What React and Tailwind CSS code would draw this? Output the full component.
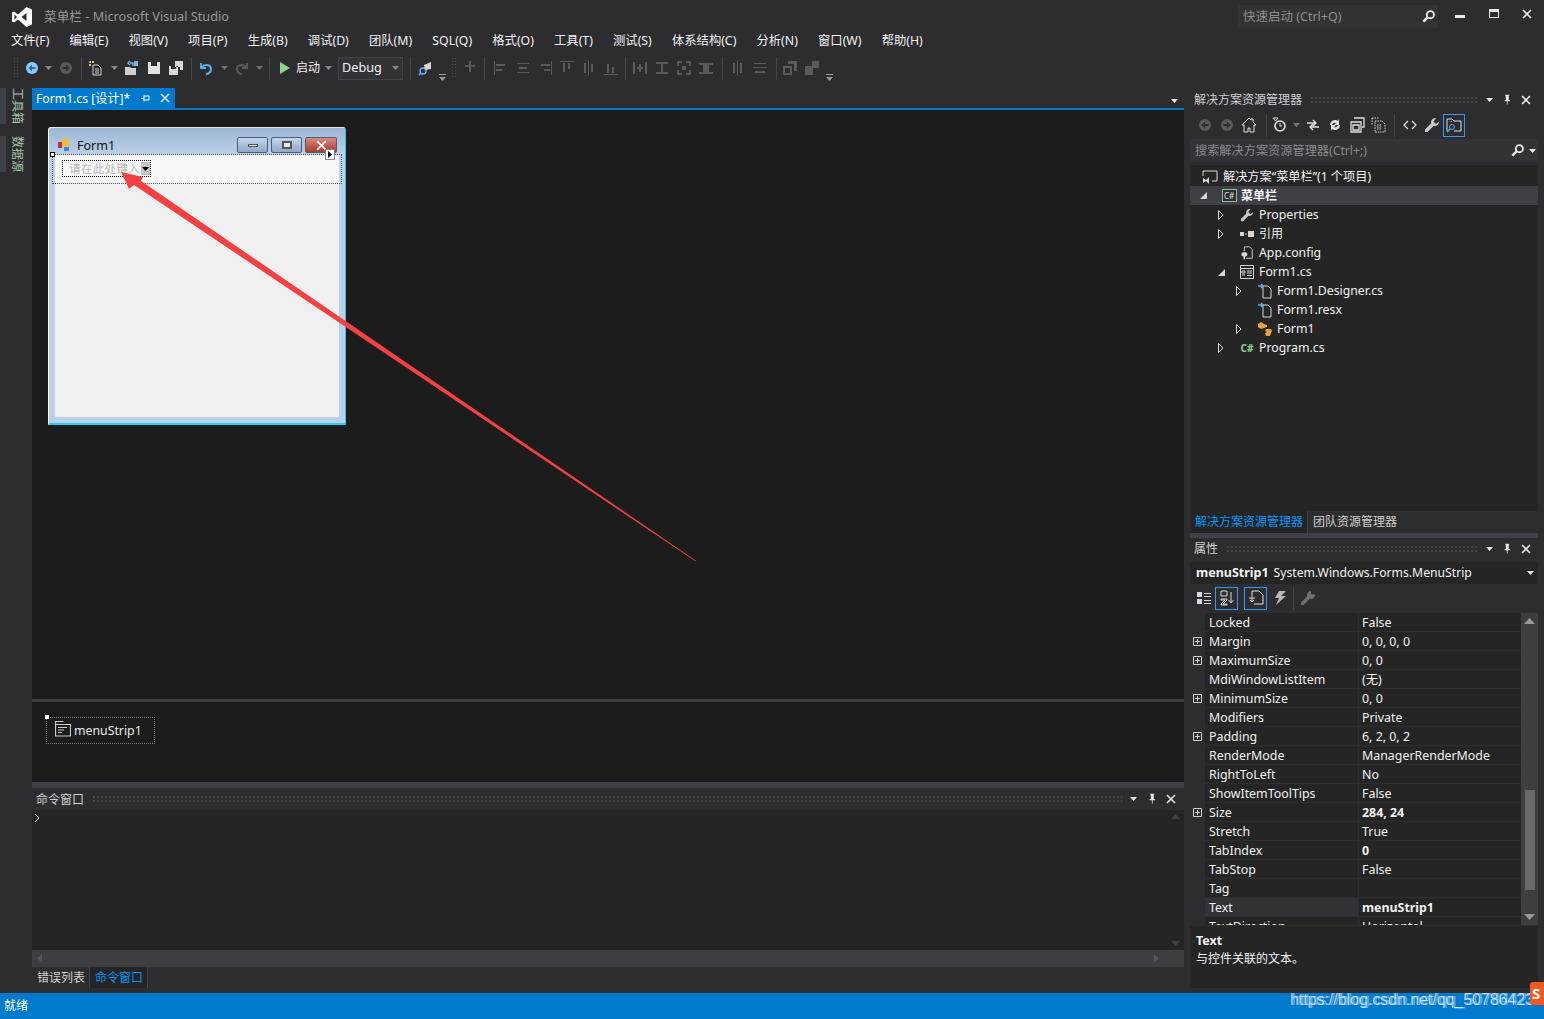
import React from "react";

const S = ({ children, size = 16, className = "" }) => (
  <svg width={size} height={size} viewBox="0 0 16 16" fill="none" className={`shrink-0 ${className}`}>{children}</svg>
);
const D = "#5a5a5d";
const L = "#d0d0d0";

const Caret = ({ c = "#8a8a8a" }) => (
  <svg width="7" height="4" viewBox="0 0 7 4" className="shrink-0"><path d="M0 0h7L3.5 4z" fill={c} /></svg>
);
const Sep = () => <div className="w-px h-[23px] bg-[#46464a] shrink-0" />;
const Grip = () => (
  <div className="w-[5px] h-[22px] shrink-0 bg-[radial-gradient(#4c4c50_1px,transparent_1px)] bg-[length:3px_3px]" />
);
const Overflow = () => (
  <svg width="7" height="7" viewBox="0 0 7 7" className="shrink-0 block"><path d="M0 0h7v1H0zM0 3h7L3.5 7z" fill="#9a9a9a" /></svg>
);

const CircleArrow = ({ fill, dir, arrow = "#2d2d30" }) => (
  <S>
    <circle cx="8" cy="8" r="6" fill={fill} />
    {dir === "l" ? (
      <path d="M8 4.5 4.5 8 8 11.5V9h3.5V7H8z" fill={arrow} />
    ) : (
      <path d="M8 4.5 11.5 8 8 11.5V9H4.5V7H8z" fill={arrow} />
    )}
  </S>
);

const Search = ({ c = "#e8e8e8" }) => (
  <S size={15}>
    <circle cx="10" cy="6" r="3.8" stroke={c} strokeWidth="2" />
    <path d="M7 9 2.5 13.5" stroke={c} strokeWidth="2.6" />
  </S>
);
const Pin = ({ c = "#e8e8e8" }) => (
  <S size={12}>
    <path d="M4 1h6v1H9v6h1.5v1.5H7.5V14h-1V9.500H3.500V8H5V2H4z" fill={c} />
  </S>
);
const X = ({ size = 10, c = "#e8e8e8" }) => (
  <svg width={size} height={size} viewBox="0 0 10 10" className="shrink-0"><path d="M1 1l8 8M9 1L1 9" stroke={c} strokeWidth="1.6" /></svg>
);

const menu = ["文件(F)", "编辑(E)", "视图(V)", "项目(P)", "生成(B)", "调试(D)", "团队(M)", "SQL(Q)", "格式(O)", "工具(T)", "测试(S)", "体系结构(C)", "分析(N)", "窗口(W)", "帮助(H)"];

const Align = ({ d }) => <S className="mx-[3px]"><path d={d} fill={D} /></S>;

const TopBar = () => (
  <div className="h-[84px] shrink-0 flex flex-col">
    <div className="h-[30px] flex items-start">
      <svg width="22" height="22" viewBox="0 0 22 22" className="ml-[11px] mt-[6px] shrink-0">
        <path d="M15.500 1 21 3.500v15L15.500 21 7 13.500 3 16.500 1 15.500v-9l2-1 4 3zM15.500 7 10.500 11l5 4z" fill="#fff" fillRule="evenodd" />
        <path d="M3.500 8.500v5L6 11z" fill="#2d2d30" />
      </svg>
      <div className="ml-[11px] mt-[7px] w-[190px] whitespace-nowrap text-[12.700px] leading-[19px] text-[#999999]">菜单栏 - Microsoft Visual Studio</div>
      <div className="ml-[1004px] mt-[5px] w-[200px] h-[23px] bg-[#333337] flex items-center justify-between pl-[5px] pr-[2px] text-[12.500px] text-[#8f8f8f]">
        <span className="pt-px">快速启动 (Ctrl+Q)</span>
        <Search />
      </div>
      <div className="ml-[17px] mt-[15px] w-[10px] h-[3px] bg-[#e8e8e8] shrink-0" />
      <div className="ml-[24px] mt-[9px] w-[10px] h-[9px] border border-[#e8e8e8] border-t-[3px] shrink-0" />
      <div className="ml-[23px] mt-[9px]"><X /></div>
    </div>
    <div className="h-[22px] flex items-center pl-[11px] gap-[20.200px] text-[12.300px] text-[#f1f1f1]">
      {menu.map((m) => <span key={m} className="whitespace-nowrap">{m}</span>)}
    </div>
    <div className="h-[32px] flex items-center pl-[13px] text-[#f1f1f1]">
      <Grip />
      <div className="ml-[6px]"><CircleArrow fill="#8fc8f6" dir="l" arrow="#1e6fb8" /></div>
      <div className="ml-[5px]"><Caret /></div>
      <div className="ml-[6px]"><CircleArrow fill={D} dir="r" /></div>
      <div className="ml-[7px]"><Sep /></div>
      <S className="ml-[6px]">
        <path d="M5 5h5l3 3v7H5z" stroke={L} fill="none" />
        <path d="M1 1h2v2H1zM4 1h2v2H4zM1 4h2v2H1z" fill="#d8c070" />
        <path d="M7 9h4M7 11h4M7 13h4" stroke={L} />
      </S>
      <div className="ml-[7px]"><Caret /></div>
      <S className="ml-[6px]">
        <path d="M1 7h5l1 1h5v7H1z" fill="#cfcfcf" />
        <path d="M9 6V3h-3M6 1 4 3l2 2" stroke="#6fb5ee" strokeWidth="1.500" />
        <path d="M10 1h4v5h-4z" fill="#6fb5ee" />
      </S>
      <S className="ml-[6px]"><path d="M2 2h12v12H2zM5 2v4h6V2z" fill="#e2e2e2" fillRule="evenodd" /></S>
      <S className="ml-[6px]"><path d="M7 1h8v9h-3V7H7zM1 6h9v9H1zM3 6v3h5V6z" fill="#d8d8d8" fillRule="evenodd" /></S>
      <div className="ml-[7px]"><Sep /></div>
      <S className="ml-[6px]">
        <path d="M3 3v5h5" stroke="#5aaeee" strokeWidth="1.800" />
        <path d="M3.500 7.500C6 4 12.500 4 13 8.500c.3 3-2 5-5 6" stroke="#5aaeee" strokeWidth="2" />
      </S>
      <div className="ml-[7px]"><Caret c="#6f6f6f" /></div>
      <S className="ml-[6px]">
        <path d="M13 3v5H8" stroke={D} strokeWidth="1.800" />
        <path d="M12.500 7.500C10 4 3.500 4 3 8.500c-.3 3 2 5 5 6" stroke={D} strokeWidth="2" />
      </S>
      <div className="ml-[6px]"><Caret c="#6f6f6f" /></div>
      <div className="ml-[6px]"><Sep /></div>
      <svg width="12" height="14" viewBox="0 0 12 14" className="ml-[9px] shrink-0"><path d="M1 1l10 6-10 6z" fill="#8cd28c" /></svg>
      <span className="ml-[5px] text-[12px] w-[26px]">启动</span>
      <div className="ml-[3px]"><Caret /></div>
      <div className="ml-[6px] w-[65px] h-[23px] border border-[#434346] bg-[#333337] flex items-center justify-between pl-[3px] pr-[3px] text-[12.700px]">
        <span>Debug</span><Caret />
      </div>
      <div className="ml-[7px]"><Sep /></div>
      <S className="ml-[7px]">
        <circle cx="5" cy="11" r="3" stroke="#66b2ee" strokeWidth="1.400" />
        <path d="M3 13 1 15" stroke="#66b2ee" strokeWidth="1.600" />
        <path d="M6 5l7-3v7l-6 1z" fill="#d6d6d6" />
      </S>
      <div className="ml-[5px] self-end mb-[3px]"><Overflow /></div>
      <div className="ml-[5px]"><Grip /></div>
      <div className="ml-[3px]"><Align d="M3 5h10v2H3zM7 7h2v5H7zM7 1h2v4H7z" /></div>
      <div className="ml-[3px]"><Sep /></div>
      <div className="ml-[5px] flex items-center">
        <Align d="M1 1h1v14H1zM3 4h9v2H3zM3 9h6v2H3z" />
        <Align d="M2 3h12v1H2zM4 7h8v2H4zM2 12h12v1H2z" />
        <Align d="M14 1h1v14h-1zM4 4h9v2H4zM7 9h6v2H7z" />
        <Align d="M1 1h14v1H1zM4 3h2v9H4zM9 3h2v6H9z" />
        <Align d="M3 3h2v10H3zM7 1h1v14H7zM10 4h2v8h-2z" />
        <Align d="M1 14h14v1H1zM4 4h2v9H4zM9 7h2v6H9z" />
      </div>
      <div className="ml-[3px]"><Sep /></div>
      <div className="ml-[3px] flex items-center">
        <Align d="M1 2h2v12H1zM13 2h2v12h-2zM7 4h2v3h2v2H9v3H7V9H5V7h2z" />
        <Align d="M2 2h12v2H2zM2 12h12v2H2zM7 4h2v8H7z" />
        <Align d="M1 1h5v2H3v3H1zM10 1h5v5h-2V3h-3zM1 10h2v3h3v2H1zM13 10h2v5h-5v-2h3zM6 6h4v4H6z" />
        <Align d="M1 3h14v2H1zM1 12h14v2H1zM5 5h6v7H5z" />
      </div>
      <div className="ml-[5px]"><Sep /></div>
      <div className="ml-[4px] flex items-center">
        <Align d="M3 3h2v10H3zM7 1h1v14H7zM10 3h2v10h-2z" />
        <Align d="M2 3h12v1H2zM1 7h14v1H1zM3 11h10v2H3z" />
      </div>
      <div className="ml-[5px]"><Sep /></div>
      <div className="ml-[2px] flex items-center">
        <Align d="M1 6h9v9H1zM3 8v5h5V8zM12 1h3v10h-3V4H6V1z" />
        <Align d="M1 6h8v9H1zM8 1h7v7H8z" />
      </div>
      <div className="ml-[3px] self-end mb-[3px]"><Overflow /></div>
    </div>
  </div>
);

const LeftStrip = () => (
  <div className="w-[32px] shrink-0 flex flex-col gap-[12px]">
    <div className="h-[36px] border-l-[6px] border-[#3f3f46] pl-[4px] flex justify-center w-[24px]">
      <span className="[writing-mode:vertical-rl] [text-orientation:sideways] whitespace-nowrap text-[12px] leading-[14px] text-[#a3c5a8]">工具箱</span>
    </div>
    <div className="h-[36px] border-l-[6px] border-[#3f3f46] pl-[4px] flex justify-center w-[24px]">
      <span className="[writing-mode:vertical-rl] [text-orientation:sideways] whitespace-nowrap text-[12px] leading-[14px] text-[#a3c5a8]">数据源</span>
    </div>
  </div>
);

const WinBtn = ({ w, bg, children }) => (
  <div className={`h-[16px] ${w} ${bg} border border-[#4d5f78] rounded-[2px] flex items-center justify-center`}>{children}</div>
);

const Form = () => (
  <div className="relative ml-[16px] mt-[17px] w-[298px] h-[298px] bg-[#b9d1ea] border border-l-white border-t-[#dfe8f2] border-r-[#25cdea] border-b-2 border-b-[#25cdea] rounded-t-[3px] flex flex-col">
    <div className="h-[27px] bg-gradient-to-b from-[#9cb6d5] to-[#bcd1e8] flex items-start pl-[9px] rounded-t-[3px] shrink-0">
      <svg width="14" height="14" viewBox="0 0 14 14" className="mt-[10px] shrink-0">
        <rect x="0" y="4" width="4" height="6" fill="#b33" /><rect x="4" y="1" width="7" height="7" fill="#f0c030" /><rect x="6" y="9" width="5" height="4" fill="#4a80d0" />
      </svg>
      <span className="ml-[5px] mt-[8px] text-[12.500px] leading-[19px] text-[#111]">Form1</span>
      <div className="ml-auto mr-[8px] mt-[9px] flex gap-[3px]">
        <WinBtn w="w-[31px]" bg="bg-gradient-to-b from-[#c5d6ea] to-[#8fa9c9]"><div className="w-[10px] h-[3px] bg-[#e8e8e8] border border-[#555]" /></WinBtn>
        <WinBtn w="w-[31px]" bg="bg-gradient-to-b from-[#c5d6ea] to-[#8fa9c9]"><div className="w-[10px] h-[8px] bg-[#e8e8e8] border-2 border-[#555]" /></WinBtn>
        <WinBtn w="w-[32px]" bg="bg-gradient-to-b from-[#d98a7e] to-[#a8382a]"><X size={11} c="#f4f4f4" /></WinBtn>
      </div>
    </div>
    <div className="mx-[6px] mb-[6px] flex-1 bg-[#f0f0f0] flex flex-col">
      <div className="h-[27px] bg-[#f8f8f8] pl-[7px] pt-[5px] shrink-0">
        <div className="w-[89px] h-[17px] border border-dotted border-black flex items-center justify-between pl-[6px] text-[11.800px] text-[#b8b8b8]">
          <span className="whitespace-nowrap">请在此处键入</span>
          <div className="w-[9px] h-[13px] bg-[#c4c4c4] flex items-center justify-center shrink-0"><Caret c="#000" /></div>
        </div>
      </div>
    </div>
    <div className="absolute left-[3px] top-[26px] w-[290px] h-[30px] border border-dotted border-[#555]" />
    <div className="absolute left-[1px] top-[24px] w-[5px] h-[5px] bg-white border border-black" />
    <div className="absolute left-[276px] top-[21px] w-[10px] h-[11px] bg-white border border-[#888] flex items-center justify-center">
      <svg width="4" height="7" viewBox="0 0 4 7"><path d="M0 0l4 3.500L0 7z" fill="#000" /></svg>
    </div>
  </div>
);

const Center = () => (
  <div className="flex-1 min-w-0 flex flex-col">
    <div className="h-[22px] shrink-0 flex items-stretch border-b-2 border-[#007acc] relative">
      <div className="w-[143px] bg-[#007acc] flex items-center pl-[4px] text-[12.200px] text-white whitespace-nowrap">
        <span className="pt-[3px] w-[94px]">Form1.cs [设计]*</span>
        <svg width="9" height="9" viewBox="0 0 9 9" className="ml-[11px] shrink-0"><path d="M0 4.500h3M3 1.500v6M3 2h5v4H3" stroke="#fff" fill="none" /></svg>
        <div className="ml-[10px]"><X /></div>
      </div>
      <div className="absolute right-[6px] top-[11px]"><Caret c="#e8e8e8" /></div>
    </div>
    <div className="h-[592px] shrink-0 bg-[#1c1c1c] border-b-[3px] border-[#3f3f46]"><Form /></div>
    <div className="h-[80px] shrink-0 bg-[#1c1c1c] pl-[14px] pt-[15px] relative">
      <div className="w-[109px] h-[27px] border border-dotted border-[#777] flex items-center pl-[8px] text-[12.300px] text-[#e8e8e8]">
        <svg width="16" height="16" viewBox="0 0 16 16" className="mb-[4px] shrink-0">
          <path d="M.5.500h8M.5 0v15.500M0 3.500h15.500v11.500H.5" stroke="#ccc" strokeWidth="1.200" fill="none" />
          <path d="M3 6.500h9M3 9h6M3 11.500h4" stroke="#ccc" />
        </svg>
        <span className="ml-[3px] pt-[2px]">menuStrip1</span>
      </div>
      <div className="absolute left-[13px] top-[13px] w-[4px] h-[4px] bg-white" />
    </div>
    <div className="h-[6px] shrink-0 bg-[#3f3f46]" />
    <div className="h-[22px] shrink-0 flex items-center pl-[4px] pr-[8px] text-[12px] text-[#d0d0d0]">
      <span className="pt-px">命令窗口</span>
      <div className="flex-1 mx-[8px] h-[8px] bg-[radial-gradient(#46464a_1px,transparent_1px)] bg-[length:4px_4px]" />
      <Caret c="#e8e8e8" />
      <div className="ml-[10px]"><Pin /></div>
      <div className="ml-[7px]"><X /></div>
    </div>
    <div className="h-[140px] shrink-0 bg-[#252526] flex">
      <div className="flex-1 pl-[2px] pt-[3px]">
        <svg width="6" height="10" viewBox="0 0 6 10"><path d="M1 1l4 4-4 4" stroke="#ddd" fill="none" /></svg>
      </div>
      <div className="w-[17px] flex flex-col items-center justify-between py-[4px]">
        <svg width="9" height="5" viewBox="0 0 9 5"><path d="M0 5l4.500-5L9 5z" fill="#434346" /></svg>
        <svg width="9" height="5" viewBox="0 0 9 5"><path d="M0 0l4.500 5L9 0z" fill="#434346" /></svg>
      </div>
    </div>
    <div className="h-[17px] shrink-0 bg-[#3e3e42] flex items-center justify-between px-[5px] pr-[25px]">
      <svg width="5" height="9" viewBox="0 0 5 9"><path d="M5 0L0 4.500 5 9z" fill="#555558" /></svg>
      <svg width="5" height="9" viewBox="0 0 5 9"><path d="M0 0l5 4.500L0 9z" fill="#555558" /></svg>
    </div>
    <div className="h-[21px] shrink-0 flex items-stretch text-[12px]">
      <div className="w-[58px] flex items-center pl-[5px] text-[#d0d0d0] border-r border-[#3f3f46] whitespace-nowrap">错误列表</div>
      <div className="w-[58px] flex items-center pl-[5px] text-[#0097fb] bg-[#252526] border-r border-[#3f3f46] whitespace-nowrap">命令窗口</div>
    </div>
  </div>
);

const Panel = ({ title }) => (
  <div className="h-[22px] shrink-0 flex items-center pl-[4px] pr-[7px] text-[12px] text-[#d0d0d0]">
    <span className="whitespace-nowrap">{title}</span>
    <div className="flex-1 mx-[8px] h-[8px] bg-[radial-gradient(#46464a_1px,transparent_1px)] bg-[length:4px_4px]" />
    <Caret c="#e8e8e8" />
    <div className="ml-[9px]"><Pin /></div>
    <div className="ml-[7px]"><X /></div>
  </div>
);

const Closed = () => <svg width="6" height="10" viewBox="0 0 6 10"><path d="M.5.500 5 5 .5 9.500z" stroke="#d8d8d8" fill="none" /></svg>;
const Open = () => <svg width="7" height="7" viewBox="0 0 7 7"><path d="M7 0v7H0z" fill="#d8d8d8" /></svg>;

const Row = ({ pad, exp, icon, text, bold, active, cjk }) => (
  <div className={`h-[19px] flex items-center ${cjk ? "text-[12px]" : "text-[12.300px] pt-px"} ${pad} ${active ? "bg-[#3f3f46]" : ""}`}>
    <div className="w-[12px] flex justify-center">{exp === "o" ? <Open /> : exp === "c" ? <Closed /> : null}</div>
    <div className="ml-[12px] w-[16px] h-[16px] flex items-center justify-center shrink-0">{icon}</div>
    <span className={`ml-[4px] text-[#f1f1f1] ${bold ? "font-bold" : ""}`}>{text}</span>
  </div>
);

const FileArrow = () => (
  <S>
    <path d="M6 3h5l3 3v9H6z" stroke="#d8d8d8" fill="none" />
    <path d="M1 3h5M4 1l2 2-2 2" stroke="#5aaeee" strokeWidth="1.500" fill="none" />
  </S>
);

const SolutionPanel = () => (
  <div className="h-[445px] pt-[1px] shrink-0 flex flex-col">
    <Panel title="解决方案资源管理器" />
    <div className="h-[26px] mt-[1px] shrink-0 flex items-center pl-[7px] text-[#e8e8e8]">
      <CircleArrow fill={D} dir="l" />
      <div className="ml-[6px]"><CircleArrow fill={D} dir="r" /></div>
      <S className="ml-[6px]"><path d="M8 1 1 8h2v7h4v-4h2v4h4V8h2L12 5V2h-2v1z" stroke="#e0e0e0" fill="none" /></S>
      <div className="ml-[9px]"><Sep /></div>
      <S className="ml-[4px]"><circle cx="9" cy="9" r="5" stroke="#e0e0e0" strokeWidth="1.600" /><path d="M9 6v3h2M2 1h5L4.500 4z" stroke="#e0e0e0" /></S>
      <div className="ml-[6px]"><Caret c="#777" /></div>
      <S className="ml-[5px]"><path d="M2 6h9M8 3l3 3-3 3M14 10H5M8 7l-3 3 3 3" stroke="#e0e0e0" strokeWidth="1.400" fill="none" /></S>
      <S className="ml-[6px]"><path d="M3 8a5 5 0 0 1 8-4l1-2v6H7l2-2a3 3 0 0 0-4 2zM13 8a5 5 0 0 1-8 4l-1 2V8h5l-2 2a3 3 0 0 0 4-2z" fill="#e0e0e0" /></S>
      <S className="ml-[6px]"><path d="M5 1h10v9h-2M2 5h10v10H2zM4 8h6v5H4z" stroke="#e0e0e0" strokeWidth="1.300" fill="none" /></S>
      <S className="ml-[6px]"><path d="M4 4h7l3 3v8H4zM1 1h7M1 1v7M6 8h5M6 10h5M6 12h5" stroke="#d8d8d8" strokeDasharray="1.500 1" fill="none" /></S>
      <div className="ml-[7px]"><Sep /></div>
      <S className="ml-[7px]"><path d="M6 4 2 8l4 4M10 4l4 4-4 4" stroke="#e0e0e0" strokeWidth="1.300" fill="none" /></S>
      <S className="ml-[6px]"><path d="M11 1a4 4 0 0 0-3.800 5.200L1 12.500V15h2.500l6.300-6.200A4 4 0 0 0 15 4.500l-3 2.500-2.500-2.500L12 1.500z" fill="#c8c8c8" /></S>
      <div className="ml-[3px] w-[22px] h-[23px] border border-[#3399ff] flex items-center justify-center">
        <S>
          <path d="M1 14V2h5l2 2h7v10H8M5 4v1" stroke="#e0e0e0" fill="none" />
          <circle cx="6" cy="10" r="2.500" stroke="#5aaeee" /><path d="M4 12l-3 3" stroke="#5aaeee" strokeWidth="1.400" />
        </S>
      </div>
    </div>
    <div className="h-[23px] mt-[1px] shrink-0 bg-[#333337] flex items-center justify-between pl-[5px] pr-[2px] text-[12.200px] text-[#8a8a8a]">
      <span className="pt-px">搜索解决方案资源管理器(Ctrl+;)</span>
      <div className="flex items-center gap-[4px]"><Search /><Caret c="#e8e8e8" /></div>
    </div>
    <div className="flex-1 bg-[#252526] mt-[3px] pt-[2px] min-h-0">
      <div className="h-[19px] flex items-center pl-[12px] text-[12.200px] text-[#f1f1f1]">
        <S><path d="M1 2h14v10h-5M1 2v5" stroke="#d8d8d8" fill="none" /><path d="M1 9l3 2 3-3v7l-3-3-3 2z" fill="#d8d8d8" /></S>
        <span className="ml-[5px] pt-px">解决方案“菜单栏”(1 个项目)</span>
      </div>
      <Row pad="pl-[7px]" exp="o" active bold cjk text="菜单栏" icon={
        <div className="w-[15px] h-[13px] border border-[#8cc08c] bg-[#2d2d30] text-[8px] leading-[11px] text-center text-[#e0e0e0]">C#</div>
      } />
      <Row pad="pl-[25px]" exp="c" text="Properties" icon={<S size={14}><path d="M11 1a4 4 0 0 0-3.800 5.200L1 12.500V15h2.500l6.300-6.200A4 4 0 0 0 15 4.500l-3 2.500-2.500-2.500L12 1.500z" fill="#c8c8c8" /></S>} />
      <Row pad="pl-[25px]" exp="c" cjk text="引用" icon={<svg width="14" height="6" viewBox="0 0 14 6"><path d="M0 1h4v4H0zM5 2.500h2v1H5zM8 0h6v6H8z" fill="#d8d8d8" /></svg>} />
      <Row pad="pl-[25px]" text="App.config" icon={<S size={14}><path d="M5 1h6l3 3v10H7M5 1v5" stroke="#d8d8d8" fill="none" /><path d="M4 7a2.500 2.500 0 1 0 0 5v3h2v-3a2.500 2.500 0 0 0 0-5z" fill="#d8d8d8" /></S>} />
      <Row pad="pl-[25px]" exp="o" text="Form1.cs" icon={<S><path d="M1.500 1.500h13v13h-13zM1 4.500h14M3 7h3v2H3zM8 7h5M8 9h5M3 11h3M8 11.500h5" stroke="#d8d8d8" fill="none" /></S>} />
      <Row pad="pl-[43px]" exp="c" text="Form1.Designer.cs" icon={<FileArrow />} />
      <Row pad="pl-[43px]" text="Form1.resx" icon={<FileArrow />} />
      <Row pad="pl-[43px]" exp="c" text="Form1" icon={<S><path d="M1 3l3-2 3 2 3 1v2L7 7 4 8 1 6zM9 8h5l1 2-1 2-1 3H9l-1-3 2-1-2-1z" fill="#e8a33c" /></S>} />
      <Row pad="pl-[25px]" exp="c" text="Program.cs" icon={<span className="text-[10px] leading-none font-bold text-[#8cd28c]">C#</span>} />
    </div>
    <div className="h-[22px] shrink-0 bg-[#2d2d30] flex items-stretch text-[12px]">
      <div className="w-[118px] flex items-center pl-[5px] text-[#0097fb] bg-[#252526] border-r border-[#3f3f46] whitespace-nowrap">解决方案资源管理器</div>
      <div className="flex items-center pl-[5px] text-[#d0d0d0] whitespace-nowrap">团队资源管理器</div>
    </div>
  </div>
);

const props = [
  ["Locked", "False"],
  ["Margin", "0, 0, 0, 0", 1],
  ["MaximumSize", "0, 0", 1],
  ["MdiWindowListItem", "(无)"],
  ["MinimumSize", "0, 0", 1],
  ["Modifiers", "Private"],
  ["Padding", "6, 2, 0, 2", 1],
  ["RenderMode", "ManagerRenderMode"],
  ["RightToLeft", "No"],
  ["ShowItemToolTips", "False"],
  ["Size", "284, 24", 1, 1],
  ["Stretch", "True"],
  ["TabIndex", "0", 0, 1],
  ["TabStop", "False"],
  ["Tag", ""],
  ["Text", "menuStrip1", 0, 1, 1],
  ["TextDirection", "Horizontal"],
];

const PropsPanel = () => (
  <div className="flex-1 min-h-0 flex flex-col">
    <Panel title="属性" />
    <div className="h-[22px] mt-[2px] shrink-0 bg-[#252526] flex items-center pl-[6px] pr-[4px] text-[12.500px] text-[#f1f1f1]">
      <span className="font-bold">menuStrip1</span>
      <span className="ml-[5px] text-[12.200px]">System.Windows.Forms.MenuStrip</span>
      <div className="ml-auto"><Caret c="#e8e8e8" /></div>
    </div>
    <div className="h-[28px] shrink-0 flex items-center pl-[6px]">
      <S><path d="M1 2h5v5H1zM1 9h5v5H1zM8 3h7v1H8zM8 6h7v1H8zM8 10h7v1H8zM8 13h7v1H8z" fill="#d8d8d8" /></S>
      <div className="ml-[3px] w-[23px] h-[23px] border border-[#3399ff] flex items-center justify-center">
        <S><path d="M2 1h6v5H2zM2 9h6v1L4 14h4v1H2v-1l4-4H2zM12 2v11M9.500 10l2.500 3 2.500-3" stroke="#d8d8d8" fill="none" /></S>
      </div>
      <div className="ml-[6px] w-[23px] h-[23px] border border-[#3399ff] flex items-center justify-center">
        <S><path d="M4 1h7l4 4v9H6M4 1v6M1 8h6M4 8v4M2 10l2 2 2-2" stroke="#e0e0e0" fill="none" /></S>
      </div>
      <S className="ml-[5px]"><path d="M7 1h7L9 6h5L4 15l3-7H3z" fill="#b8b8b8" /></S>
      <div className="ml-[5px]"><Sep /></div>
      <S className="ml-[6px]"><path d="M11 1a4 4 0 0 0-3.800 5.200L1 12.500V15h2.500l6.300-6.200A4 4 0 0 0 15 4.500L11 4z" fill="#707070" /></S>
    </div>
    <div className="h-[312px] mt-[1px] shrink-0 flex overflow-hidden">
      <div className="flex-1 min-w-0 bg-[#252526]">
        {props.map(([n, v, plus, b, sel]) => (
          <div key={n} className="h-[19px] flex items-stretch text-[12.400px] text-[#f1f1f1]">
            <div className="w-[15px] bg-[#2d2d30] flex items-center justify-center">
              {plus ? (
                <svg width="9" height="9" viewBox="0 0 9 9"><path d="M.5.500h8v8h-8zM2 4.500h5M4.500 2v5" stroke="#d0d0d0" fill="none" /></svg>
              ) : null}
            </div>
            <div className={`w-[154px] pl-[4px] pt-[2px] flex items-center border-b border-r border-[#2d2d30] ${sel ? "bg-[#333337]" : ""}`}>{n}</div>
            <div className={`flex-1 pl-[3px] pt-[2px] flex items-center border-b border-[#2d2d30] ${b ? "font-bold" : ""}`}>{v}</div>
          </div>
        ))}
      </div>
      <div className="w-[17px] bg-[#3e3e42] relative flex flex-col items-center justify-between py-[5px]">
        <svg width="11" height="6" viewBox="0 0 11 6"><path d="M0 6l5.500-6L11 6z" fill="#999" /></svg>
        <div className="absolute left-[4px] top-[177px] w-[10px] h-[100px] bg-[#686868]" />
        <svg width="11" height="6" viewBox="0 0 11 6"><path d="M0 0l5.500 6L11 0z" fill="#999" /></svg>
      </div>
    </div>
    <div className="flex-1 mt-px mb-[5px] bg-[#252526] pl-[6px] pt-[5px] text-[12px] text-[#f1f1f1]">
      <div className="font-bold text-[12.500px] leading-[19px]">Text</div>
      <div className="leading-[18px]">与控件关联的文本。</div>
    </div>
  </div>
);

const Arrow = () => (
  <svg width="1544" height="1019" viewBox="0 0 1544 1019" className="absolute left-0 top-0 pointer-events-none">
    <path d="M696 560.700 141 181 143 177 121 172 129 189 134 185 695.400 561.300z" fill="#f44040" />
  </svg>
);

export default function App() {
  return (
    <div
      className="relative w-[1544px] h-[1019px] overflow-hidden bg-[#2d2d30] flex flex-col text-[#f1f1f1]"
      style={{ fontFamily: '"Noto Sans", "Noto Sans CJK SC", sans-serif' }}
    >
      <TopBar />
      <div className="flex-1 min-h-0 flex pt-[4px]">
        <LeftStrip />
        <Center />
        <div className="w-[6px] shrink-0" />
        <div className="w-[348px] shrink-0 flex flex-col">
          <SolutionPanel />
          <div className="h-[5px] shrink-0 bg-[#3f3f46]" />
          <PropsPanel />
        </div>
        <div className="w-[6px] shrink-0" />
      </div>
      <div className="h-[26px] shrink-0 bg-[#007acc] flex items-center pl-[4px] text-[12px] text-white">就绪</div>
      <Arrow />
      <div className="absolute left-[1290px] top-[990px] whitespace-nowrap text-[15.900px] leading-[20px] text-white/70 [font-family:'Liberation_Sans',sans-serif]">https://blog.csdn.net/qq_50786423</div>
      <div className="absolute left-[1292px] top-[990px] whitespace-nowrap text-[15.900px] leading-[20px] text-white/40 [font-family:'Liberation_Sans',sans-serif]">https://blog.csdn.net/qq_50784423</div>
      <div className="absolute left-[1530px] top-[982px] w-[20px] h-[23px] bg-[#f05a22] rounded-[3px] text-white font-bold text-[15px] leading-[23px] pl-[2px]">S</div>
    </div>
  );
}
